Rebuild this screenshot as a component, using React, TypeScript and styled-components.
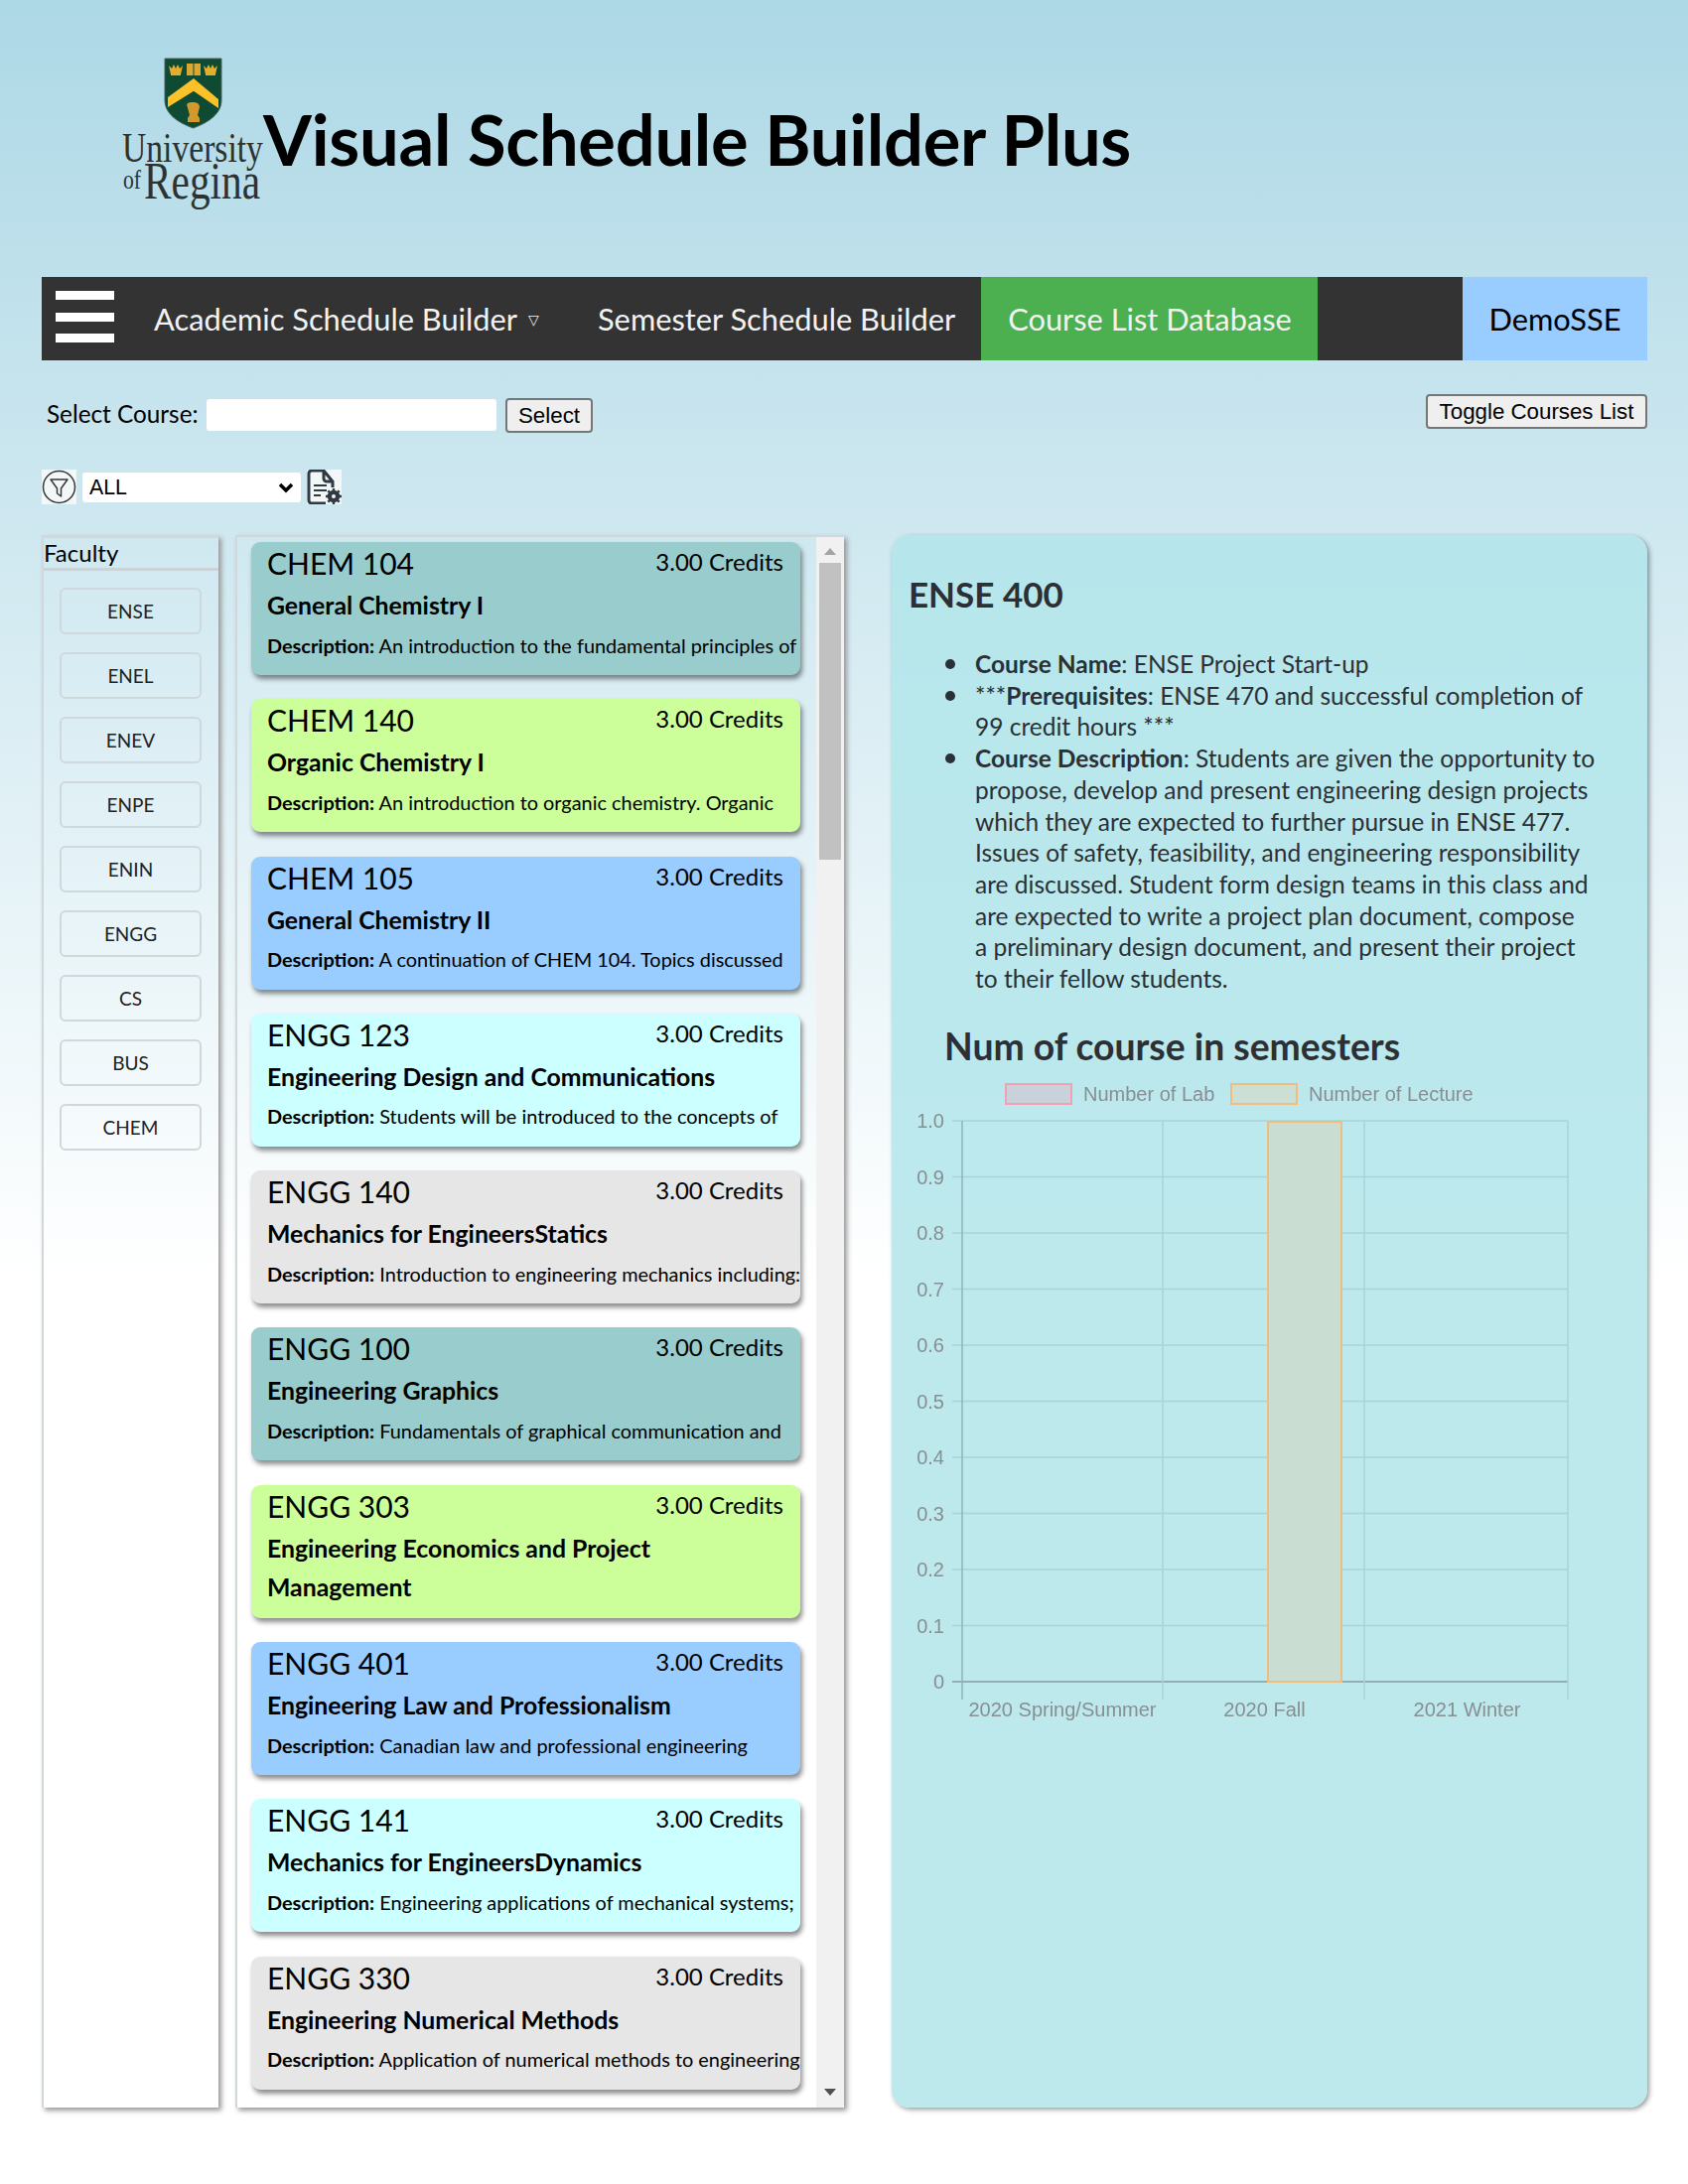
import React from "react"
import styled, { createGlobalStyle } from "styled-components"

const GlobalStyle = createGlobalStyle`
html, body {
  margin: 0;
  padding: 0;
}
body {
  min-height: 2200px;
  font-family: Lato, "Open Sans", sans-serif;
  background: linear-gradient(180deg, #add8e6 0, #ffffff 1290px) no-repeat;
  color: #000;
}
* {
  box-sizing: border-box;
}
`

const faculties = ["ENSE", "ENEL", "ENEV", "ENPE", "ENIN", "ENGG", "CS", "BUS", "CHEM"]

const palette = ["#99cccc", "#ccff99", "#99ccff", "#ccffff", "#e6e6e6"]

const courses = [
  { code: "CHEM 104", name: "General Chemistry I", text: "An introduction to the fundamental principles of" },
  { code: "CHEM 140", name: "Organic Chemistry I", text: "An introduction to organic chemistry. Organic" },
  { code: "CHEM 105", name: "General Chemistry II", text: "A continuation of CHEM 104. Topics discussed" },
  { code: "ENGG 123", name: "Engineering Design and Communications", text: "Students will be introduced to the concepts of" },
  { code: "ENGG 140", name: "Mechanics for EngineersStatics", text: "Introduction to engineering mechanics including:" },
  { code: "ENGG 100", name: "Engineering Graphics", text: "Fundamentals of graphical communication and" },
  { code: "ENGG 303", name: "Engineering Economics and Project Management" },
  { code: "ENGG 401", name: "Engineering Law and Professionalism", text: "Canadian law and professional engineering" },
  { code: "ENGG 141", name: "Mechanics for EngineersDynamics", text: "Engineering applications of mechanical systems;" },
  { code: "ENGG 330", name: "Engineering Numerical Methods", text: "Application of numerical methods to engineering" },
]

const yTicks = ["1.0", "0.9", "0.8", "0.7", "0.6", "0.5", "0.4", "0.3", "0.2", "0.1", "0"]

const Crown = ({ x }: { x: number }) => (
  <g transform={`translate(${x} 7)`} fill="#e6ad2d">
    <path d="M0 2l3 3 2-4 2 4 2-4 2 4 3-3-2 9H2z" />
    <rect x="2" y="10" width="10" height="2" />
  </g>
)

const Logo = () => (
  <svg width="146" height="156" viewBox="0 0 146 156">
    <path d="M44 2h57v42c0 13-12 22-28.500 28C56 66 44 57 44 44z" fill="#0f4a32" stroke="#4a5f5a" strokeWidth="1" />
    <path d="M73 22L98 43v9L73 34.700 47 51v-10z" fill="#fdc12a" />
    <Crown x={48} />
    <Crown x={83} />
    <rect x="66" y="7" width="14" height="12" fill="#d9a733" />
    <path d="M73 7v12" stroke="#0f4a32" strokeWidth="1" />
    <path d="M66 48c2-2 4-2 6-2 4 0 7 1 7 5l-2 8 2 3v4H67v-4l2-3z" fill="#d29a2b" />
    <LogoText transform="translate(1 106) scale(0.782 1)" fontSize="43">University</LogoText>
    <LogoText transform="translate(2 133) scale(0.8 1)" fontSize="27">of</LogoText>
    <LogoText transform="translate(23 143) scale(0.795 1)" fontSize="52">Regina</LogoText>
  </svg>
)

const FilterIcon = () => (
  <svg width="35" height="35" viewBox="0 0 35 35">
    <rect width="35" height="35" fill="#f4f7f8" />
    <circle cx="17.500" cy="17.500" r="16" fill="none" stroke="#33393d" strokeWidth="1.500" />
    <path d="M9 10h17l-6.500 9v8l-4-3v-5z" fill="none" stroke="#33393d" strokeWidth="1.500" strokeLinejoin="round" />
  </svg>
)

const DocSettingsIcon = () => (
  <svg width="35" height="35" viewBox="0 0 35 35">
    <rect width="35" height="35" fill="#f4f7f8" />
    <path d="M2 4a3 3 0 0 1 3-3h12l9 11v6M17 1v8a3 3 0 0 0 3 3h6M2 4v27a3 3 0 0 0 3 3h14" fill="none" stroke="#2f3a42" strokeWidth="3" />
    <path d="M7 16h13M7 21h13M7 26h7" stroke="#2f3a42" strokeWidth="2" />
    <circle cx="27" cy="27" r="4.500" fill="none" stroke="#2f3a42" strokeWidth="3.500" />
    <path d="M27 19v16M19 27h16M21.300 21.300l11.400 11.400M32.700 21.300L21.300 32.700" stroke="#2f3a42" strokeWidth="2.400" />
    <circle cx="27" cy="27" r="2" fill="#f4f7f8" />
  </svg>
)

const Chart = () => (
  <ChartSvg width="700" height="680" viewBox="0 0 700 680">
    <rect x="95" y="13" width="66" height="20" fill="#c9d2da" stroke="#f3a0b4" strokeWidth="2" />
    <text x="173" y="30" fontSize="20">Number of Lab</text>
    <rect x="322" y="13" width="66" height="20" fill="#cbdfd4" stroke="#f0bd7e" strokeWidth="2" />
    <text x="400" y="30" fontSize="20">Number of Lecture</text>
    {yTicks.map((tick, i) => {
      const y = 50 + i * 56.5
      return (
        <g key={tick}>
          <line x1="41" x2="661" y1={y} y2={y} stroke={i === 10 ? "#8fb0b5" : "#a9d3d7"} strokeWidth={i === 10 ? 2 : 1.500} />
          <text x="33" y={y + 7} fontSize="20" textAnchor="end">{tick}</text>
        </g>
      )
    })}
    <line x1="51" x2="51" y1="50" y2="633" stroke="#90b2b7" strokeWidth="1.500" />
    <line x1="253" x2="253" y1="50" y2="633" stroke="#a9d3d7" strokeWidth="1.500" />
    <line x1="456" x2="456" y1="50" y2="633" stroke="#a9d3d7" strokeWidth="1.500" />
    <line x1="661" x2="661" y1="50" y2="633" stroke="#a9d3d7" strokeWidth="1.500" />
    <rect x="359" y="51" width="74" height="564" fill="#c9ddd3" stroke="#f0bd7e" strokeWidth="2" />
    <text x="152" y="650" fontSize="20" textAnchor="middle">2020 Spring/Summer</text>
    <text x="355.500" y="650" fontSize="20" textAnchor="middle">2020 Fall</text>
    <text x="559.500" y="650" fontSize="20" textAnchor="middle">2021 Winter</text>
  </ChartSvg>
)

const App = () => {
  return (
    <Page>
      <GlobalStyle />
      <Header>
        <Logo />
        <Title>Visual Schedule Builder Plus</Title>
      </Header>
      <Nav>
        <Burger>
          <BurgerBar />
          <BurgerBar />
          <BurgerBar />
        </Burger>
        <NavItem>Academic Schedule Builder<Caret>▽</Caret></NavItem>
        <NavItem>Semester Schedule Builder</NavItem>
        <NavItem $active>Course List Database</NavItem>
        <NavSpacer />
        <UserItem>DemoSSE</UserItem>
      </Nav>
      <SelectRow>
        <SelectLabel>Select Course:</SelectLabel>
        <CourseInput />
        <PlainButton>Select</PlainButton>
        <ToggleButton>Toggle Courses List</ToggleButton>
      </SelectRow>
      <FilterRow>
        <FilterIcon />
        <SelectWrap>
          <FilterSelect defaultValue="ALL">
            <option>ALL</option>
          </FilterSelect>
          <Chevron width="16" height="11" viewBox="0 0 16 11">
            <path d="M2 2l6 6 6-6" fill="none" stroke="#000" strokeWidth="3.500" />
          </Chevron>
        </SelectWrap>
        <DocSettingsIcon />
      </FilterRow>
      <Columns>
        <FacultyPanel>
          <FacultyHead>Faculty</FacultyHead>
          <FacultyList>
            {faculties.map((f) => (
              <FacultyButton key={f}>{f}</FacultyButton>
            ))}
          </FacultyList>
        </FacultyPanel>
        <ListPanel>
          <CardList>
            {courses.map((c, i) => (
              <Card key={c.code} $bg={palette[i % palette.length]}>
                <CardTop>
                  <Code>{c.code}</Code>
                  <Credits>3.00 Credits</Credits>
                </CardTop>
                <CourseName>{c.name}</CourseName>
                {c.text && <Description><b>Description:</b> {c.text}</Description>}
              </Card>
            ))}
          </CardList>
          <Scrollbar>
            <ArrowUp />
            <Thumb />
            <ArrowDown />
          </Scrollbar>
        </ListPanel>
        <DetailPanel>
          <DetailTitle>ENSE 400</DetailTitle>
          <DetailList>
            <li><b>Course Name</b>: ENSE Project Start-up</li>
            <li>***<b>Prerequisites</b>: ENSE 470 and successful completion of 99 credit hours ***</li>
            <li><b>Course Description</b>: Students are given the opportunity to propose, develop and present engineering design projects which they are expected to further pursue in ENSE 477. Issues of safety, feasibility, and engineering responsibility are discussed. Student form design teams in this class and are expected to write a project plan document, compose a{"\u00a0"}preliminary design document, and present their project to their fellow students.</li>
          </DetailList>
          <ChartTitle>Num of course in semesters</ChartTitle>
          <Chart />
        </DetailPanel>
      </Columns>
    </Page>
  )
}

export default App

const Page = styled.div`
width: 1700px;
padding: 0 41px 0 42px;`

const Header = styled.div`
height: 279px;
padding: 57px 0 0 80px;
display: flex;
align-items: flex-start;`

const LogoText = styled.text`
font-family: "Liberation Serif", serif;
fill: #2d3231;`

const Title = styled.h1`
margin: 44px 0 0 -3px;
font-size: 70.500px;
line-height: 78px;
font-weight: 700;
letter-spacing: -0.3px;
white-space: nowrap;`

const Nav = styled.div`
height: 84px;
background-color: #333333;
display: flex;
align-items: stretch;`

const Burger = styled.div`
width: 86px;
padding: 14px 0 0 14px;
display: flex;
flex-direction: column;
gap: 12.500px;`

const BurgerBar = styled.div`
width: 59px;
height: 9px;
background-color: #fff;`

const NavItem = styled.div<{ $active?: boolean }>`
padding: 0 26px 0 27px;
display: flex;
align-items: center;
font-size: 30.800px;
color: #f2f2f2;
white-space: nowrap;
background-color: ${(p) => (p.$active ? "#4caf50" : "transparent")};`

const Caret = styled.span`
margin: 0 6px 0 11px;
font-size: 14px;`

const NavSpacer = styled.div`
flex: 1;`

const UserItem = styled.div`
width: 186px;
display: flex;
align-items: center;
justify-content: center;
font-size: 30.800px;
background-color: #99ccff;`

const SelectRow = styled.div`
height: 90px;
padding: 34px 0 0 5px;
display: flex;
align-items: flex-start;`

const SelectLabel = styled.div`
font-size: 24.300px;
line-height: 40px;
width: 161px;
white-space: nowrap;`

const CourseInput = styled.input`
width: 292px;
height: 32px;
margin-top: 5px;
border: none;
border-radius: 3px;
background: #fff;`

const PlainButton = styled.button`
width: 88px;
height: 35px;
margin: 4px 0 0 9px;
padding: 0;
border: 2px solid #767676;
border-radius: 4px;
background: #efefef;
font-family: "Liberation Sans", Arial, sans-serif;
font-size: 22.300px;
color: #000;`

const ToggleButton = styled(PlainButton)`
width: 223px;
margin: 0 0 0 auto;`

const FilterRow = styled.div`
height: 86px;
padding-top: 20px;
display: flex;
align-items: flex-start;
gap: 6px;`

const SelectWrap = styled.div`
position: relative;
width: 220px;
height: 30px;
margin-top: 3px;`

const FilterSelect = styled.select`
appearance: none;
width: 100%;
height: 100%;
padding-left: 7px;
border: none;
border-radius: 3px;
background: #fff;
font-family: "Liberation Sans", Arial, sans-serif;
font-size: 21.300px;
color: #000;`

const Chevron = styled.svg`
position: absolute;
top: 10px;
right: 7px;`

const Columns = styled.div`
height: 1584px;
display: flex;
align-items: stretch;`

const FacultyPanel = styled.div`
width: 178px;
border: 2px solid #d0d8dc;
border-width: 3px 0 0 2px;
box-shadow: 3px 3px 5px #999;`

const FacultyHead = styled.div`
height: 33px;
border-bottom: 3px solid #c9d4d9;
font-size: 24px;
line-height: 30px;`

const FacultyList = styled.div`
padding: 17px 17px 0 16px;
display: flex;
flex-direction: column;
gap: 18px;`

const FacultyButton = styled.div`
height: 47px;
border: 2px solid #cfd8dc;
border-radius: 6px;
display: flex;
align-items: center;
justify-content: center;
font-size: 19px;
color: #222;`

const ListPanel = styled.div`
width: 613px;
margin-left: 17px;
border-top: 2px solid #d0d8dc;
border-left: 2px solid #d0d8dc;
box-shadow: 3px 3px 5px #999;
display: flex;
overflow: hidden;`

const CardList = styled.div`
flex: 1;
min-width: 0;
padding: 5px 16px 0 14px;
display: flex;
flex-direction: column;
gap: 24.300px;
overflow: hidden;`

const Card = styled.div<{ $bg: string }>`
flex: none;
height: 134px;
padding: 0 0 0 16px;
border-radius: 9px;
background-color: ${(p) => p.$bg};
box-shadow: 2px 4px 5px rgba(0, 0, 0, 0.45);
overflow: hidden;`

const CardTop = styled.div`
display: flex;
justify-content: space-between;
align-items: center;
padding-right: 17px;
height: 43px;`

const Code = styled.span`
font-size: 30px;
line-height: 43px;`

const Credits = styled.span`
font-size: 24px;
margin-top: -4px;`

const CourseName = styled.div`
font-size: 24.800px;
font-weight: 700;
line-height: 39.500px;
margin-top: 1px;
max-width: 480px;`

const Description = styled.div`
font-size: 19.900px;
line-height: 40px;
height: 40px;
white-space: nowrap;`

const Scrollbar = styled.div`
flex: none;
width: 28px;
background-color: #f1f1f1;
position: relative;`

const Thumb = styled.div`
position: absolute;
top: 26px;
left: 3px;
width: 22px;
height: 299px;
background-color: #c1c1c1;`

const ArrowUp = styled.div`
position: absolute;
top: 11px;
left: 8px;
width: 0;
height: 0;
border-left: 6px solid transparent;
border-right: 6px solid transparent;
border-bottom: 7px solid #a3a3a3;`

const ArrowDown = styled(ArrowUp)`
top: auto;
bottom: 12px;
border-bottom: none;
border-top: 7px solid #505050;`

const DetailPanel = styled.div`
width: 761px;
margin-left: 48px;
padding: 37px 0 0 17px;
border-radius: 18px;
background-color: rgba(177, 229, 234, 0.85);
box-shadow: 2px 2px 5px rgba(0, 0, 0, 0.4);
color: #2c3034;`

const DetailTitle = styled.h2`
margin: 0;
font-size: 35px;
line-height: 44px;
font-weight: 700;`

const DetailList = styled.ul`
margin: 33px 0 0;
padding: 0 0 0 67px;
width: 698px;
font-size: 24.500px;
line-height: 31.700px;
list-style: none;
li {
  position: relative;
}
li::before {
  content: "";
  position: absolute;
  top: 11px;
  left: -30px;
  width: 10px;
  height: 10px;
  border-radius: 50%;
  background-color: #2c3034;
}`

const ChartTitle = styled.h2`
margin: 30px 0 0 36px;
font-size: 37.300px;
line-height: 44px;
font-weight: 700;`

const ChartSvg = styled.svg`
display: block;
margin: 3px 0 0 3px;
overflow: visible;
font-family: "Liberation Sans", Arial, sans-serif;
fill: #868f92;
filter: blur(0.5px);`
